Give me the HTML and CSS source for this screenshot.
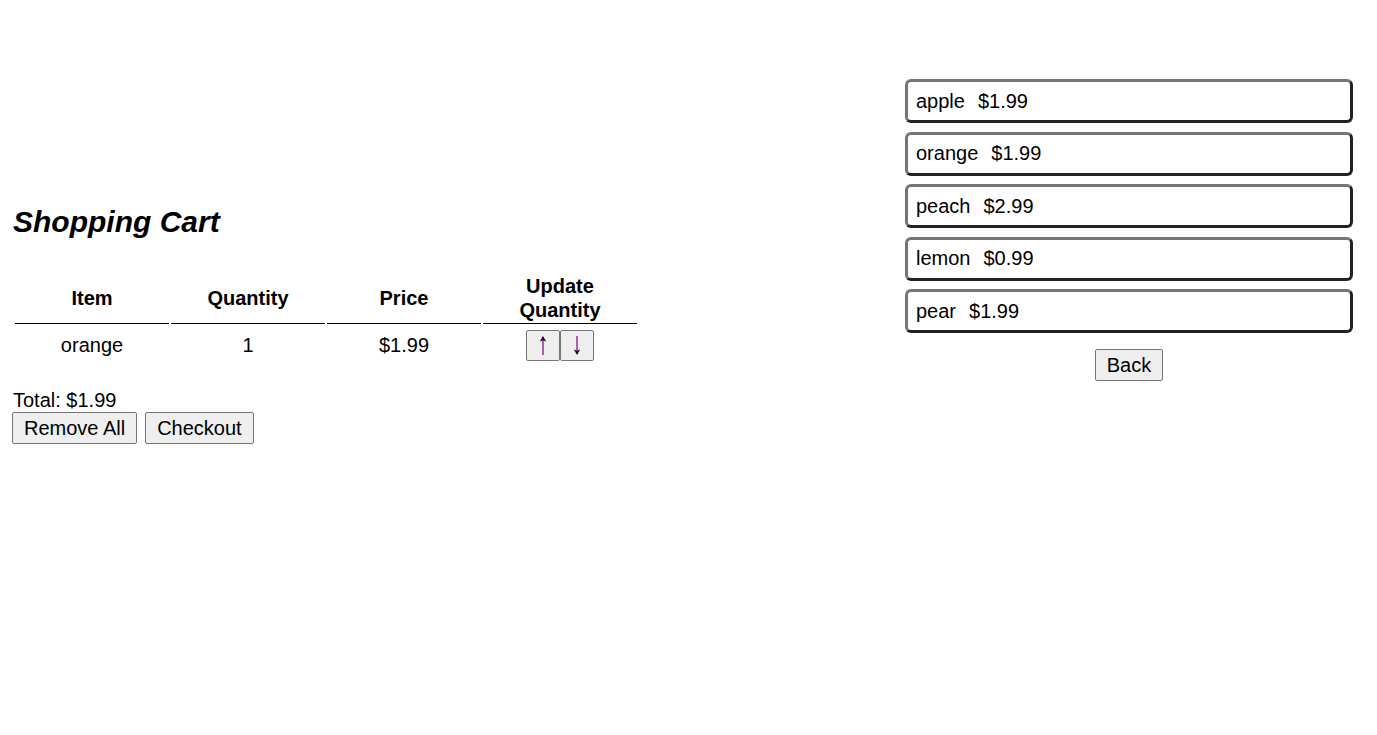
FILE: index.html
```html
<!DOCTYPE html>
<html>
<head>
<meta charset="utf-8">
<title>Shopping Cart</title>
<link rel="stylesheet" href="styles.css">
</head>
<body>
<div class="page">
  <div class="cart">
    <h2 class="cart-title">Shopping Cart</h2>
    <table class="cart-table">
      <thead>
        <tr>
          <th>Item</th>
          <th>Quantity</th>
          <th>Price</th>
          <th>Update<br>Quantity</th>
        </tr>
      </thead>
      <tbody>
        <tr>
          <td>orange</td>
          <td>1</td>
          <td>$1.99</td>
          <td><span class="qty-btns"><button class="btn arrow" aria-label="↑"><svg class="arrow-icon" viewBox="0 0 8 19" width="8" height="19"><path d="M4 1.5 V19" stroke="currentColor" stroke-width="1.2" fill="none"/><path d="M4 0 L7.2 5.5 L4 4.2 L0.8 5.5 Z" fill="#2a0030"/></svg></button><button class="btn arrow" aria-label="↓"><svg class="arrow-icon" viewBox="0 0 8 19" width="8" height="19"><path d="M4 0 V17.5" stroke="currentColor" stroke-width="1.2" fill="none"/><path d="M4 19 L7.2 13.5 L4 14.8 L0.8 13.5 Z" fill="#2a0030"/></svg></button></span></td>
        </tr>
      </tbody>
    </table>
    <div class="total">Total: $1.99</div>
    <div class="actions">
      <button class="btn">Remove All</button>
      <button class="btn">Checkout</button>
    </div>
  </div>
  <div class="store">
    <ul class="products">
      <li class="product"><span>apple</span><span class="price">$1.99</span></li>
      <li class="product"><span>orange</span><span class="price">$1.99</span></li>
      <li class="product"><span>peach</span><span class="price">$2.99</span></li>
      <li class="product"><span>lemon</span><span class="price">$0.99</span></li>
      <li class="product"><span>pear</span><span class="price">$1.99</span></li>
    </ul>
    <div class="back-row"><button class="btn">Back</button></div>
  </div>
</div>
</body>
</html>
```

FILE: styles.css
```css
html, body {
  margin: 0;
  padding: 0;
  background: #fff;
}
body {
  font-family: "Liberation Sans", Arial, sans-serif;
  font-size: 20px;
  color: #000;
}
.page {
  display: flex;
  justify-content: space-between;
  align-items: flex-start;
  padding: 0 24px 0 12px;
}
.cart {
  padding-top: 205px;
}
.cart-title {
  font-size: 30px;
  font-style: italic;
  font-weight: bold;
  line-height: 34px;
  margin: 0 0 32px 1px;
}
.cart-table {
  border-collapse: separate;
  border-spacing: 2px;
  margin-left: 1px;
}
.cart-table th,
.cart-table td {
  width: 152px;
  text-align: center;
  padding: 1px;
}
.cart-table th {
  font-weight: bold;
  line-height: 24px;
  border-bottom: 1px solid #000;
  vertical-align: middle;
}
.cart-table td {
  vertical-align: middle;
  line-height: 23px;
  padding-top: 4px;
}
.qty-btns {
  display: inline-flex;
  vertical-align: middle;
}
.btn {
  font-family: "Liberation Sans", Arial, sans-serif;
  font-size: 20px;
  line-height: 22px;
  padding: 4px 11px;
  background: #efefef;
  border: 1px solid #767676;
  border-radius: 2px;
  color: #000;
  margin: 0;
}
.btn.arrow {
  color: #800080;
  box-sizing: border-box;
  width: 34px;
  height: 31px;
  padding: 0;
  display: flex;
  align-items: center;
  justify-content: center;
}
.arrow-icon {
  display: block;
}
.total {
  margin-top: 25px;
  margin-left: 1px;
  line-height: 23px;
}
.actions {
  display: flex;
  gap: 8px;
}
.store {
  width: 448px;
  padding-top: 79px;
}
.products {
  list-style: none;
  margin: 0;
  padding: 0;
  display: flex;
  flex-direction: column;
  gap: 8.5px;
}
.product {
  border: 3px solid;
  border-color: #767676 #222 #222 #767676;
  border-radius: 6px;
  padding: 7.5px 8px;
  line-height: 23px;
}
.product .price {
  margin-left: 13px;
}
.back-row {
  display: flex;
  justify-content: center;
  margin-top: 16px;
}
```
